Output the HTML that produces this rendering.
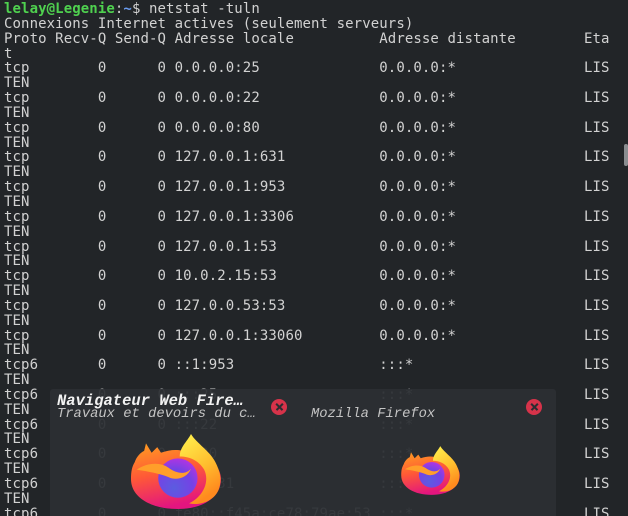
<!DOCTYPE html>
<html><head><meta charset="utf-8"><style>
html,body{margin:0;padding:0;width:628px;height:516px;overflow:hidden;}
body{background:#222528;position:relative;}
pre{margin:0;position:absolute;left:4px;top:2px;font-family:"DejaVu Sans Mono","Liberation Mono",monospace;font-size:14px;line-height:14.84px;color:#d2d2d2;letter-spacing:0.1px;}
.g{color:#4fd14f;font-weight:bold}.b{color:#6a9cf0;font-weight:bold}
.sb{position:absolute;left:624px;top:144px;width:4px;height:22px;background:#8a8d90;border-radius:2px;}
.pop{position:absolute;left:50px;top:389px;width:506px;height:127px;background:rgba(44,47,51,0.94);border-radius:3px 3px 0 0;}
.t{position:absolute;font-family:"Liberation Mono",monospace;font-style:italic;white-space:nowrap;}
.x{position:absolute;width:16px;height:16px;border-radius:50%;background:#d6334a;}
.x:before,.x:after{content:"";position:absolute;left:3.5px;top:7.3px;width:9px;height:1.5px;background:#2a2d31;transform:rotate(45deg);}
.x:after{transform:rotate(-45deg);}
</style></head><body>
<pre><span class="g">lelay@Legenie</span>:<span class="b">~</span>$ netstat -tuln
Connexions Internet actives (seulement serveurs)
Proto Recv-Q Send-Q Adresse locale          Adresse distante        Eta
t
tcp        0      0 0.0.0.0:25              0.0.0.0:*               LIS
TEN
tcp        0      0 0.0.0.0:22              0.0.0.0:*               LIS
TEN
tcp        0      0 0.0.0.0:80              0.0.0.0:*               LIS
TEN
tcp        0      0 127.0.0.1:631           0.0.0.0:*               LIS
TEN
tcp        0      0 127.0.0.1:953           0.0.0.0:*               LIS
TEN
tcp        0      0 127.0.0.1:3306          0.0.0.0:*               LIS
TEN
tcp        0      0 127.0.0.1:53            0.0.0.0:*               LIS
TEN
tcp        0      0 10.0.2.15:53            0.0.0.0:*               LIS
TEN
tcp        0      0 127.0.0.53:53           0.0.0.0:*               LIS
TEN
tcp        0      0 127.0.0.1:33060         0.0.0.0:*               LIS
TEN
tcp6       0      0 ::1:953                 :::*                    LIS
TEN
tcp6       0      0 :::25                   :::*                    LIS
TEN
tcp6       0      0 :::22                   :::*                    LIS
TEN
tcp6       0      0 :::80                   :::*                    LIS
TEN
tcp6       0      0 ::1:631                 :::*                    LIS
TEN
tcp6       0      0 fe80::f45a:ce78:79ae:53 :::*                    LIS</pre>
<div class="sb"></div>
<div class="pop">
<div class="t" style="left:7px;top:3px;font-size:15.5px;font-weight:bold;color:#f2f2f2;">Navigateur Web Fire…</div>
<div class="t" style="left:7px;top:18px;font-size:13.8px;color:#c4c4c4;">Travaux et devoirs du c…</div>
<div class="t" style="left:261px;top:18px;font-size:13.8px;color:#c4c4c4;">Mozilla Firefox</div>
<div class="x" style="left:221px;top:10px;"></div>
<div class="x" style="left:476px;top:10px;"></div>
</div>
<svg width="0" height="0" style="position:absolute"><defs>
<linearGradient id="bd" x1="0" y1="0" x2="0.3" y2="1"><stop offset="0" stop-color="#ffa11f"/><stop offset="0.5" stop-color="#ff5a36"/><stop offset="1" stop-color="#e3157f"/></linearGradient>
<linearGradient id="fl" x1="0" y1="0" x2="0.4" y2="1"><stop offset="0" stop-color="#fff44f"/><stop offset="0.6" stop-color="#ffbd2e"/><stop offset="1" stop-color="#ff8a1e"/></linearGradient>
<radialGradient id="pu" cx="0.4" cy="0.75" r="0.8"><stop offset="0" stop-color="#5b5ce0"/><stop offset="0.6" stop-color="#7542e5"/><stop offset="1" stop-color="#b833e1"/></radialGradient>
<symbol id="ff" viewBox="0 0 100 80">
<path d="M6 30 C8 24 12 20 16 18 L18 10 L24 20 L30 14 L34 20 C44 16 56 16 62 20 L80 20 C90 28 98 38 98 48 C98 68 78 80 52 80 C24 80 2 68 2 48 C2 40 3 35 6 30 Z" fill="url(#bd)"/>
<path d="M54 24 C54 14 62 8 66 0 C72 10 86 18 92 30 C97 40 99 48 96 58 C92 70 78 77 64 74 C80 66 86 50 80 38 C74 28 64 24 54 24 Z" fill="url(#fl)"/>
<circle cx="52" cy="47" r="21" fill="url(#pu)"/>
<path d="M8 38 C20 30 34 30 42 36 C50 42 60 44 66 37 C62 47 50 50 42 46 C32 42 20 40 8 38 Z" fill="#ff9f2a"/>
</symbol></defs></svg>
<svg style="position:absolute;left:127px;top:434px" width="98" height="75"><use href="#ff"/></svg>
<svg style="position:absolute;left:400px;top:445px" width="61" height="51"><use href="#ff"/></svg>
</body></html>
